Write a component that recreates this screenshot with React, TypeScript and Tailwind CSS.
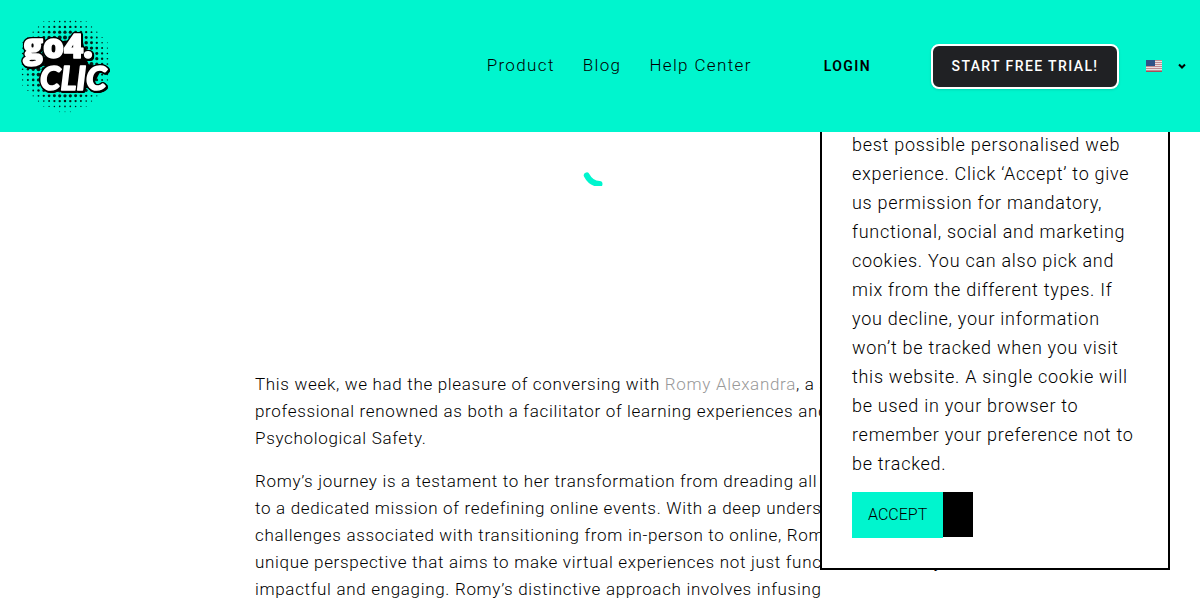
import React from "react";

const navLinks = ["Product", "Blog", "Help Center"];

const cookieLines = [
  "best possible personalised web",
  "experience. Click ‘Accept’ to give",
  "us permission for mandatory,",
  "functional, social and marketing",
  "cookies. You can also pick and",
  "mix from the different types. If",
  "you decline, your information",
  "won’t be tracked when you visit",
  "this website. A single cookie will",
  "be used in your browser to",
  "remember your preference not to",
  "be tracked.",
];

const journeyLines = [
  "Romy’s journey is a testament to her transformation from dreading all",
  "to a dedicated mission of redefining online events. With a deep understanding",
  "challenges associated with transitioning from in-person to online, Romy",
  "unique perspective that aims to make virtual experiences not just functional, but truly",
  "impactful and engaging. Romy’s distinctive approach involves infusing",
];

// halftone disc behind the logo lettering
const dots: { x: number; y: number; r: number }[] = [];
for (let row = -9; row <= 9; row++) {
  for (let col = -9; col <= 9; col++) {
    const dist = Math.hypot(col * 5.3, row * 5.3);
    if (dist < 48) {
      dots.push({ x: 47 + col * 5.3, y: 46 + row * 5.3, r: 3.9 - dist * 0.072 });
    }
  }
}

const Logo: React.FC = () => (
  <svg viewBox="0 0 94 96" className="h-24 w-[94px]" role="img" aria-label="go4clic">
    {dots.map((d) => (
      <circle key={`${d.x}-${d.y}`} cx={d.x} cy={d.y} r={d.r} fill="#04201b" />
    ))}
    <path d="M28 26l36-6 6 26 14 4-10 20-44 2-4-18z" fill="#000" />
    <g
      fill="#fff"
      stroke="#fff"
      strokeWidth="1.5"
      strokeLinejoin="round"
      className="[filter:drop-shadow(1px_0_0_#000)_drop-shadow(-1px_0_0_#000)_drop-shadow(0_1px_0_#000)_drop-shadow(0_-1px_0_#000)_drop-shadow(1px_1px_0_#000)]"
    >
      <text x="5" y="40" fontSize="33" fontWeight="800" fontFamily="Open Sans, sans-serif">
        go4.
      </text>
      <text
        x="22"
        y="72"
        fontSize="33"
        fontWeight="900"
        fontStyle="italic"
        fontFamily="Lato, sans-serif"
      >
        CLIC
      </text>
    </g>
  </svg>
);

const Flag: React.FC = () => (
  <svg viewBox="0 0 16 12" className="h-3 w-4" role="img" aria-label="English">
    <rect width="16" height="12" fill="#e9dfe2" />
    {[0, 2, 4, 6, 8, 10].map((y) => (
      <rect key={y} y={y} width="16" height="1" fill="#c08a92" />
    ))}
    <rect y="11" width="16" height="1" fill="#a8505a" />
    <rect width="9" height="6" fill="#2f5288" />
  </svg>
);

const Header: React.FC = () => (
  <header className="fixed inset-x-0 top-0 z-20 flex h-[132px] items-center bg-[#00f5ce] pl-[18px] pr-3">
    <a href="#" className="mr-auto">
      <Logo />
    </a>
    <nav className="flex items-center gap-7 text-[17px] font-light tracking-[0.08em] text-black">
      {navLinks.map((label) => (
        <a key={label} href="#">
          {label}
        </a>
      ))}
    </nav>
    <a href="#" className="ml-[72px] text-sm font-semibold tracking-widest text-black">
      LOGIN
    </a>
    <a
      href="#"
      className="ml-[60px] flex h-[45px] w-[188px] items-center justify-center rounded-lg border-2 border-white bg-[#202124] text-sm font-medium tracking-widest text-white shadow-sm"
    >
      START FREE TRIAL!
    </a>
    <button type="button" aria-label="Language" className="ml-[27px] flex items-center gap-3.5">
      <Flag />
      <svg viewBox="0 0 12 12" className="size-3" fill="none" stroke="#000" strokeWidth="2">
        <path d="M3 4.5l3 3 3-3" />
      </svg>
    </button>
  </header>
);

const CookieNotice: React.FC = () => (
  <aside className="fixed bottom-[30px] right-[30px] z-10 w-[350px] border-2 border-black bg-white p-[30px]">
    <p className="mb-[14px] text-lg font-light leading-[29px] tracking-[0.04em] text-black">
      {cookieLines.map((line) => (
        <span key={line} className="block whitespace-nowrap">
          {line}
        </span>
      ))}
    </p>
    <div className="flex items-start">
      <button type="button" className="h-[46px] bg-[#00f5ce] px-4 text-base font-light text-black">
        ACCEPT
      </button>
      <button type="button" aria-label="Decline" className="h-[45px] w-[30px] bg-black" />
    </div>
  </aside>
);

export default function App() {
  return (
    <div className="h-screen overflow-hidden bg-white font-['Roboto',sans-serif]">
      <Header />
      <main className="mx-auto max-w-[690px] pt-[150px]">
        {/* Loading spinner */}
        <svg viewBox="0 0 36 36" className="mx-auto mb-[185px] size-9" fill="none">
          <path
            d="M4.8 25.5A15.5 15.5 0 0 0 17.5 34"
            stroke="#00f5ce"
            strokeWidth="6"
            strokeLinecap="round"
            className="overflow-visible"
          />
        </svg>
        <article className="space-y-4 text-[17px] font-light leading-[27px] tracking-[0.04em] text-black">
          <p className="whitespace-nowrap">
            This week, we had the pleasure of conversing with{" "}
            <a href="#" className="text-[#999]">
              Romy Alexandra
            </a>
            , a seasoned
            <br />
            professional renowned as both a facilitator of learning experiences and
            <br />
            Psychological Safety.
          </p>
          <p>
            {journeyLines.map((line) => (
              <span key={line} className="block whitespace-nowrap">
                {line}
              </span>
            ))}
          </p>
        </article>
      </main>
      <CookieNotice />
    </div>
  );
}
